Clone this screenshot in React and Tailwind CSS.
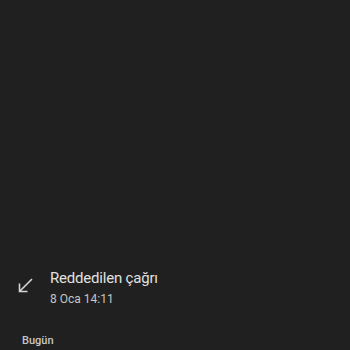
import React from "react";

export default function App() {
  return (
    <div
      className="h-[350px] w-full bg-[#202020] flex flex-col overflow-hidden"
      style={{ fontFamily: "Roboto, 'Noto Sans', sans-serif" }}
    >
      <div className="flex-1 min-h-0"></div>
      <div className="flex items-start h-[60px] pt-[10px] pl-[18px]">
        <svg
          className="w-[15px] h-[15px] mt-[10px] text-[#d4d4d4]"
          viewBox="0 0 15 15"
          fill="none"
          stroke="currentColor"
          strokeWidth="1.6"
        >
          <path d="M14 1L1.5 13.5M1.5 5.5v8h8" />
        </svg>
        <div className="ml-[17px] flex flex-col">
          <span className="text-[15px] leading-[20px] tracking-[-0.2px] text-[#e0e0e0]">
            Reddedilen çağrı
          </span>
          <span className="mt-[2px] text-[12px] leading-[18px] text-[#c4c4c4]">
            8 Oca 14:11
          </span>
        </div>
      </div>
      <div className="h-[32px] pt-[16px] pl-[22px]">
        <span className="block text-[11px] leading-[14px] font-medium text-[#c8c8c8]">
          Bugün
        </span>
      </div>
    </div>
  );
}
